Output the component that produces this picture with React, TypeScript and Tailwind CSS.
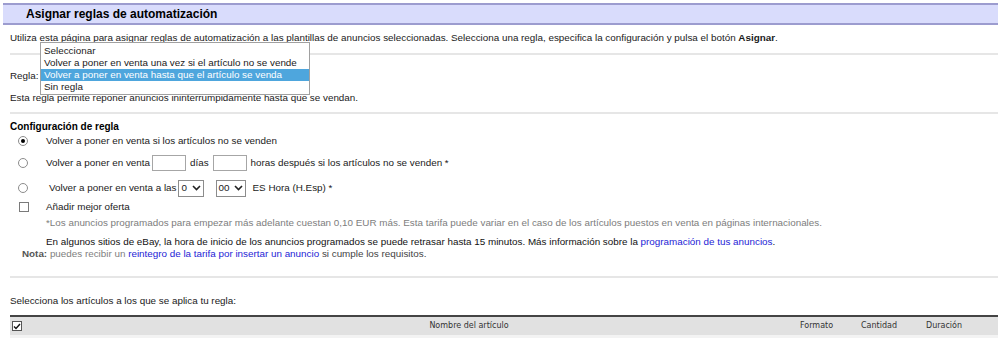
import React from "react";

function Chevron() {
  return (
    <svg width="9" height="6" viewBox="0 0 9 6" className="block">
      <polyline points="1,1 4.5,4.5 8,1" fill="none" stroke="#222" strokeWidth="1.6" />
    </svg>
  );
}

function Radio({ checked }: { checked?: boolean }) {
  return (
    <div className="w-[10px] h-[10px] rounded-full border border-[#8c8c8c] bg-white flex items-center justify-center">
      {checked ? <div className="w-[4px] h-[4px] rounded-full bg-black" /> : null}
    </div>
  );
}

export default function App() {
  return (
    <div className="relative w-[998px] h-[338px] overflow-hidden bg-white font-['Liberation_Sans',Arial,sans-serif] text-[9.85px] leading-[12px] text-[#1a1a1a]">
      <div className="pt-[3px] pl-[3px]">
        <div className="h-[22px] box-border border-t-2 border-b-2 border-[#9c9ccf] bg-[#d9dcfc] flex items-center pl-[23px] text-[12px] font-bold text-black">
          Asignar reglas de automatización
        </div>
      </div>
      <div className="pl-[10px]">
        <div className="h-[26px] leading-[26px] whitespace-nowrap">
          Utiliza esta página para asignar reglas de automatización a las plantillas de anuncios seleccionadas. Selecciona una regla, especifica la configuración y pulsa el botón <b>Asignar</b>.
        </div>
        <div className="mt-[2px] h-[2px] bg-[#e6e6e6]" />
        <div className="mt-[11px] h-[20px] leading-[20px]">Regla:</div>
        <div className="mt-[2px] h-[20px] leading-[20px]">
          Esta regla permite reponer anuncios ininterrumpidamente hasta que se vendan.
        </div>
        <div className="mt-[4px] h-[2px] bg-[#e6e6e6]" />
        <div className="mt-[6px] h-[14px] leading-[14px] font-bold text-[10px] text-black">Configuración de regla</div>

        <div className="h-[14px] flex items-center">
          <div className="ml-[8px]"><Radio checked /></div>
          <span className="ml-[18px] whitespace-nowrap">Volver a poner en venta si los artículos no se venden</span>
        </div>

        <div className="mt-[5px] h-[20px] flex items-center whitespace-nowrap">
          <div className="ml-[8px]"><Radio /></div>
          <span className="ml-[18px]">Volver a poner en venta</span>
          <div className="ml-[2px] w-[34px] h-[16px] border border-[#a6a6a6] bg-white" />
          <span className="ml-[4px]">días</span>
          <div className="ml-[4px] w-[34px] h-[16px] border border-[#a6a6a6] bg-white" />
          <span className="ml-[4px]">horas después si los artículos no se venden *</span>
        </div>

        <div className="mt-[5px] h-[20px] flex items-center whitespace-nowrap">
          <div className="ml-[8px]"><Radio /></div>
          <span className="ml-[21px]">Volver a poner en venta a las</span>
          <div className="ml-[1px] w-[26px] h-[17px] border border-[#8c8c8c] bg-white flex items-center pl-[3px] pr-[2px] justify-between">
            <span>0</span>
            <Chevron />
          </div>
          <div className="ml-[12px] w-[30px] h-[17px] border border-[#8c8c8c] bg-white flex items-center pl-[2px] pr-[2px] justify-between">
            <span>00</span>
            <Chevron />
          </div>
          <span className="ml-[7px]">ES Hora (H.Esp) *</span>
        </div>

        <div className="mt-[2px] h-[14px] flex items-center">
          <div className="ml-[9px] w-[10px] h-[10px] border border-[#7a7a7a] bg-white" />
          <span className="ml-[17px]">Añadir mejor oferta</span>
        </div>

        <div className="mt-[2px] h-[14px] leading-[14px] pl-[36px] text-[#7d7d7d] whitespace-nowrap">
          *Los anuncios programados para empezar más adelante cuestan 0,10 EUR más. Esta tarifa puede variar en el caso de los artículos puestos en venta en páginas internacionales.
        </div>
        <div className="mt-[6px] h-[12px] leading-[12px] pl-[36px] text-[#111] whitespace-nowrap">
          En algunos sitios de eBay, la hora de inicio de los anuncios programados se puede retrasar hasta 15 minutos. Más información sobre la <span className="text-[#2424d6]">programación de tus anuncios</span>.
        </div>
        <div className="h-[12px] leading-[12px] pl-[12px] whitespace-nowrap">
          <span className="font-bold text-[#555]">Nota:</span>
          <span className="text-[#808080]"> puedes recibir un </span>
          <span className="text-[#2424d6]">reintegro de la tarifa por insertar un anuncio</span>
          <span className="text-[#444]"> si cumple los requisitos.</span>
        </div>

        <div className="mt-[16px] h-[2px] bg-[#e6e6e6]" />
        <div className="mt-[16px] h-[14px] leading-[14px]">Selecciona los artículos a los que se aplica tu regla:</div>

        <div className="mt-[7px] border-t-2 border-[#444]">
          <div className="h-[18px] bg-[#e1e1e1] flex items-center font-['DejaVu_Sans',Verdana,sans-serif] text-[8px] text-[#333] whitespace-nowrap">
            <div className="w-[28px] pl-[2px]">
              <div className="w-[10px] h-[10px] border border-[#555] bg-white flex items-center justify-center">
                <svg width="8" height="7" viewBox="0 0 8 7">
                  <polyline points="1,3.5 3,5.5 7,1" fill="none" stroke="#111" strokeWidth="1.4" />
                </svg>
              </div>
            </div>
            <div className="w-[762px] pl-[100px] text-center">Nombre del artículo</div>
            <div className="w-[61px]">Formato</div>
            <div className="w-[65px]">Cantidad</div>
            <div className="flex-1">Duración</div>
          </div>
          <div className="h-[10px] bg-[#f3f3f3]" />
        </div>
      </div>

      <div className="absolute left-[40px] top-[42px] w-[270px] border border-[#a0a0a0] bg-white pt-[2px] pb-[1px] whitespace-nowrap">
        <div className="h-[12px] leading-[12px] pl-[3px]">Seleccionar</div>
        <div className="h-[12px] leading-[12px] pl-[3px]">Volver a poner en venta una vez si el artículo no se vende</div>
        <div className="h-[12px] leading-[12px] pl-[3px] bg-[#4ea6dd] text-white">Volver a poner en venta hasta que el artículo se venda</div>
        <div className="h-[12px] leading-[12px] pl-[3px]">Sin regla</div>
      </div>
    </div>
  );
}
